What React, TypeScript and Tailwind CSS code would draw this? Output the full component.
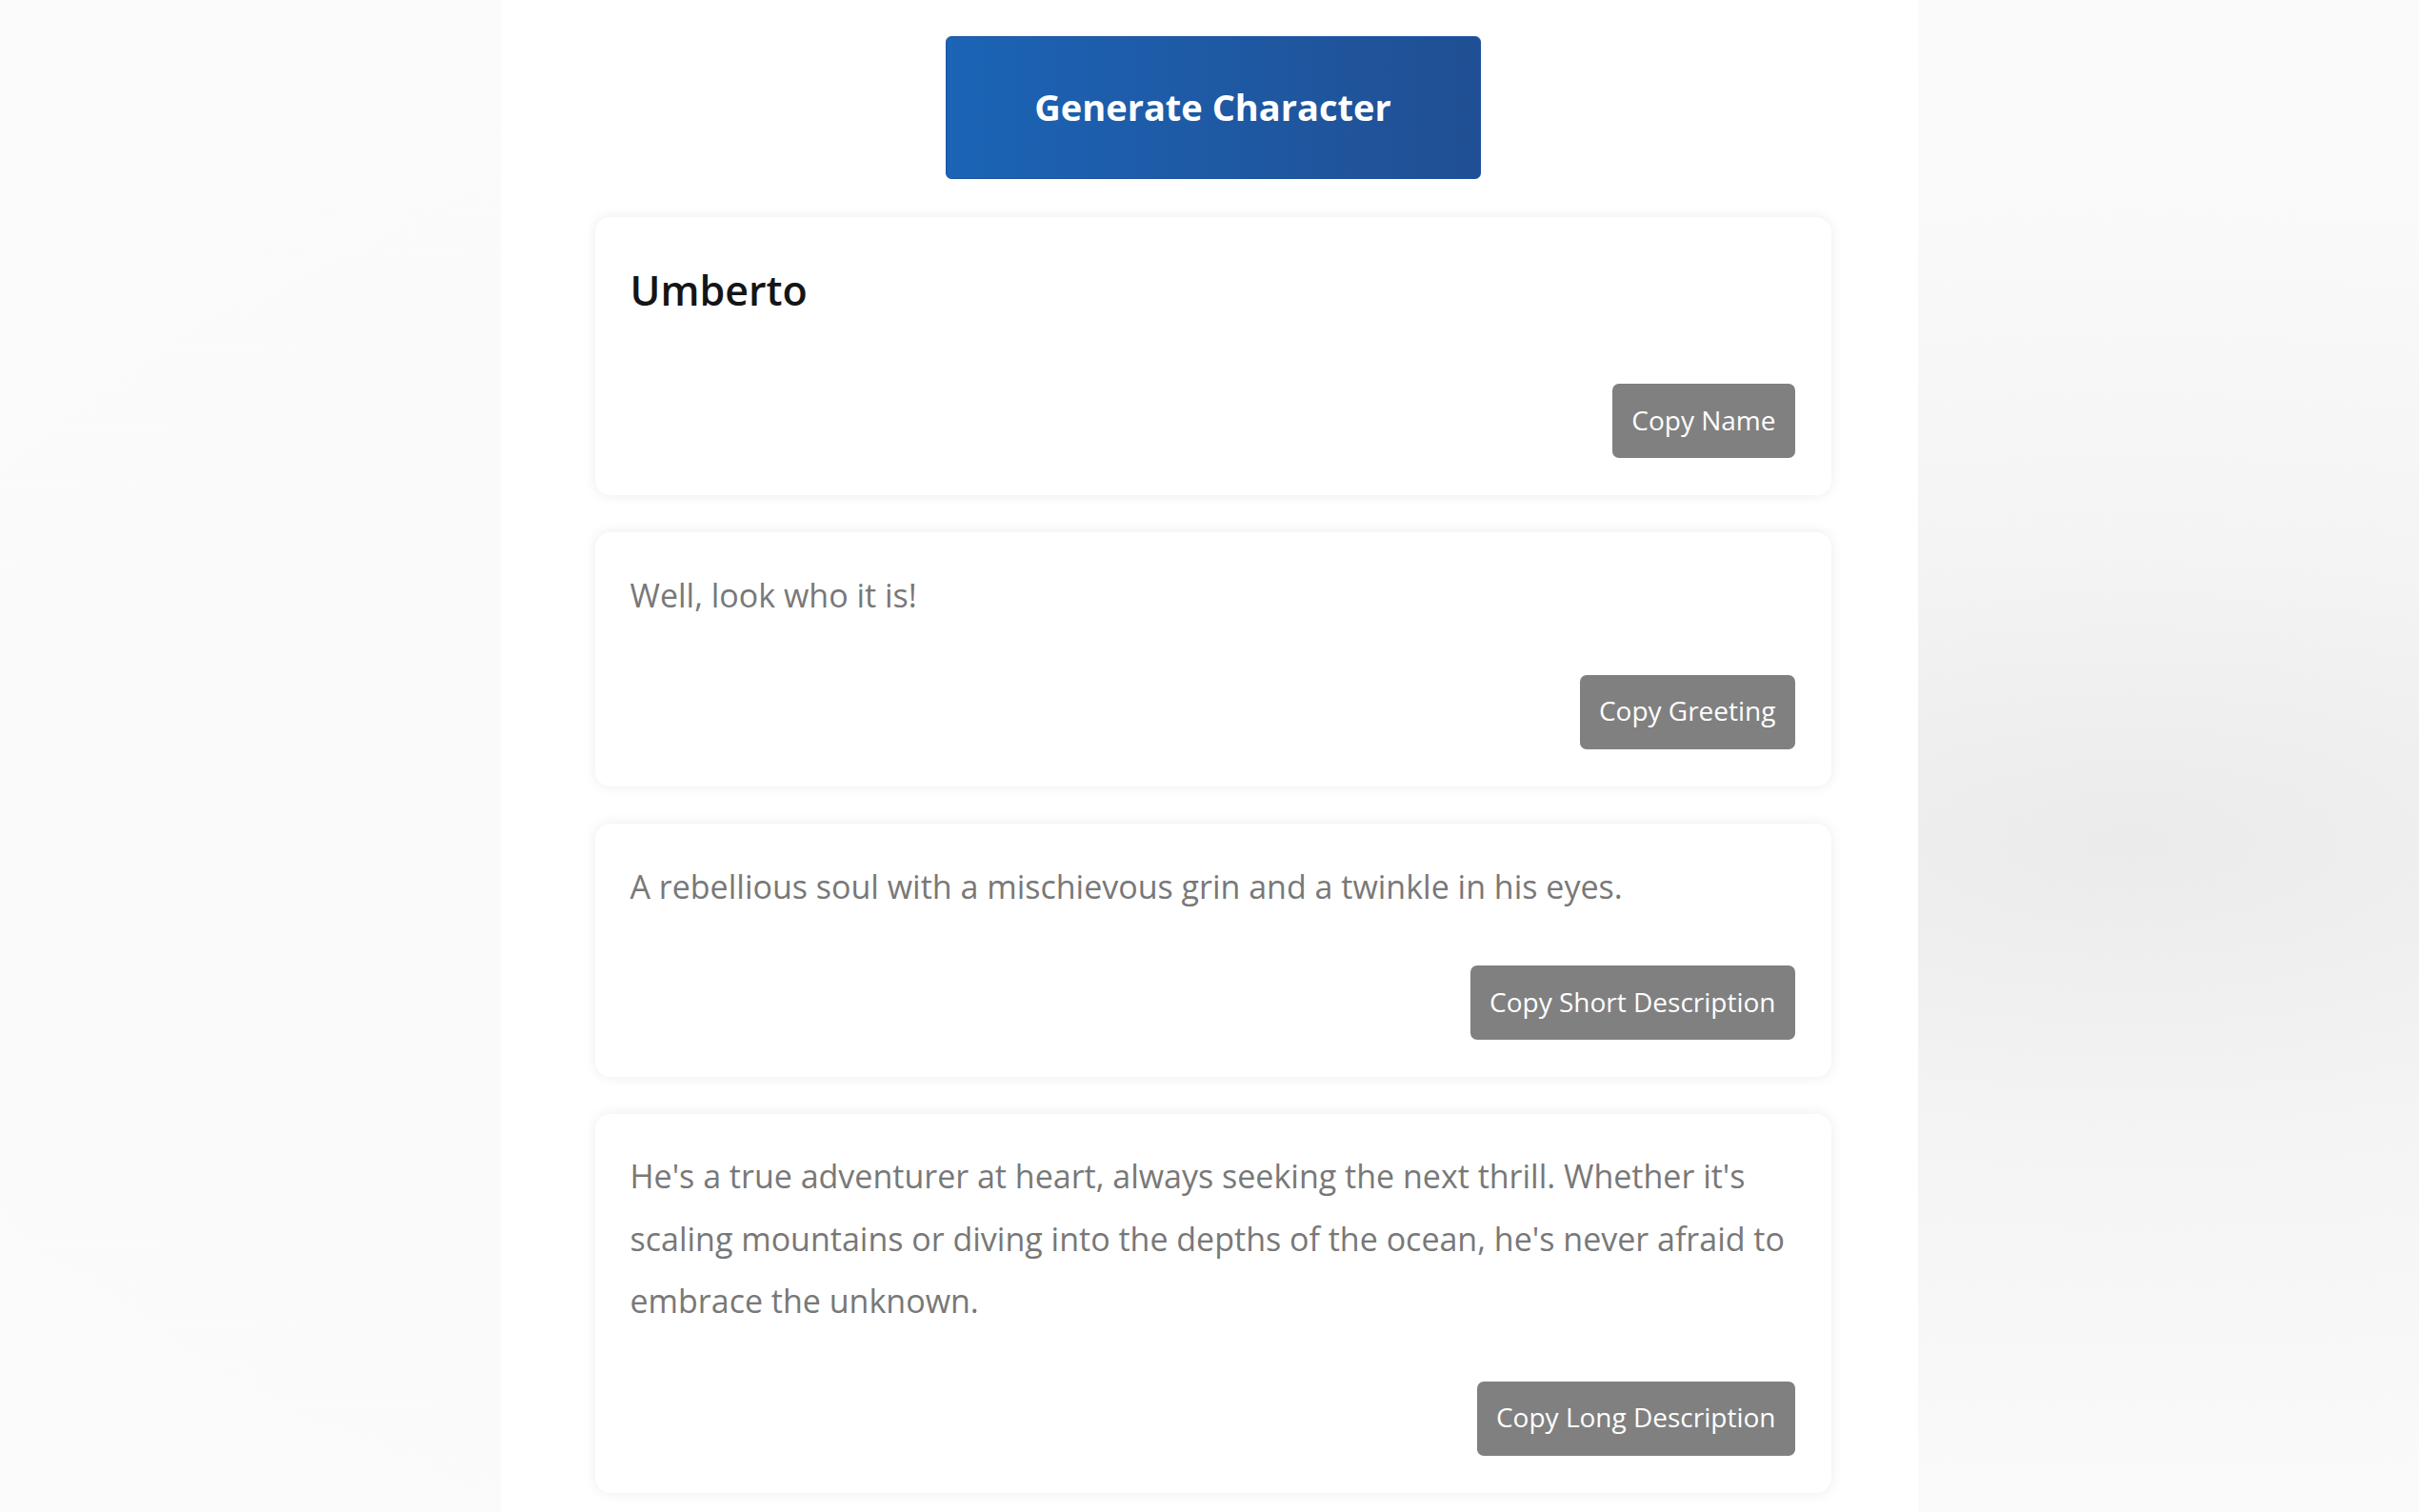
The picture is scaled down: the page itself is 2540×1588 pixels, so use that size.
import React from 'react';

type CardProps = {
    label: string;
    children: React.ReactNode;
};

const CopyCard = ({ label, children }: CardProps) => {
    return (
        <div className="flex flex-col rounded-[16px] bg-white pt-[36px] pl-[37px] pr-[38px] pb-[39px] shadow-[0_0_14px_rgba(0,0,0,0.08)]">
            {children}
            <div className="flex justify-end">
                <button className="flex h-[78px] items-center rounded-[7px] bg-[#808080] px-[20px] pb-[3px] text-[28px] font-medium text-white">
                    {label}
                </button>
            </div>
        </div>
    );
};

const character = {
    name: 'Umberto',
    greeting: 'Well, look who it is!',
    short: 'A rebellious soul with a mischievous grin and a twinkle in his eyes.',
    long: "He's a true adventurer at heart, always seeking the next thrill. Whether it's scaling mountains or diving into the depths of the ocean, he's never afraid to embrace the unknown.",
};

export default function App() {
    return (
        <div className="min-h-screen w-full bg-[radial-gradient(ellipse_at_88%_55%,#ebebeb_0%,#f4f4f4_25%,#fafafa_55%,#fbfbfb_100%)] font-['Open_Sans',sans-serif]">
            <div className="mx-auto min-h-screen w-[1488px] bg-white pt-[38px] pb-[40px] pl-[7px]">
                <div className="flex flex-col items-center gap-[40px]">
                    <button className="h-[150px] w-[562px] rounded-[6px] border border-[#1a52a0] bg-linear-to-r from-[#1b64b6] to-[#204f93] pb-[2px] text-[38px] font-bold text-white">
                        Generate Character
                    </button>

                    <div className="flex w-[1298px] flex-col gap-[39px]">
                        <CopyCard label="Copy Name">
                            <h2 className="mt-[12px] mb-[70px] text-[43px] font-semibold leading-[57px] text-[#151515]">
                                {character.name}
                            </h2>
                        </CopyCard>
                        <CopyCard label="Copy Greeting">
                            <p className="-mt-[2px] mb-[50px] text-[34px] leading-[65.5px] text-[#787878]">{character.greeting}</p>
                        </CopyCard>
                        <CopyCard label="Copy Short Description">
                            <p className="-mt-[2px] mb-[50px] text-[34px] leading-[65.5px] text-[#787878]">{character.short}</p>
                        </CopyCard>
                        <CopyCard label="Copy Long Description">
                            <p className="-mt-[3px] mb-[51px] text-[34px] leading-[65.5px] text-[#787878]">{character.long}</p>
                        </CopyCard>
                    </div>
                </div>
            </div>
        </div>
    );
}
